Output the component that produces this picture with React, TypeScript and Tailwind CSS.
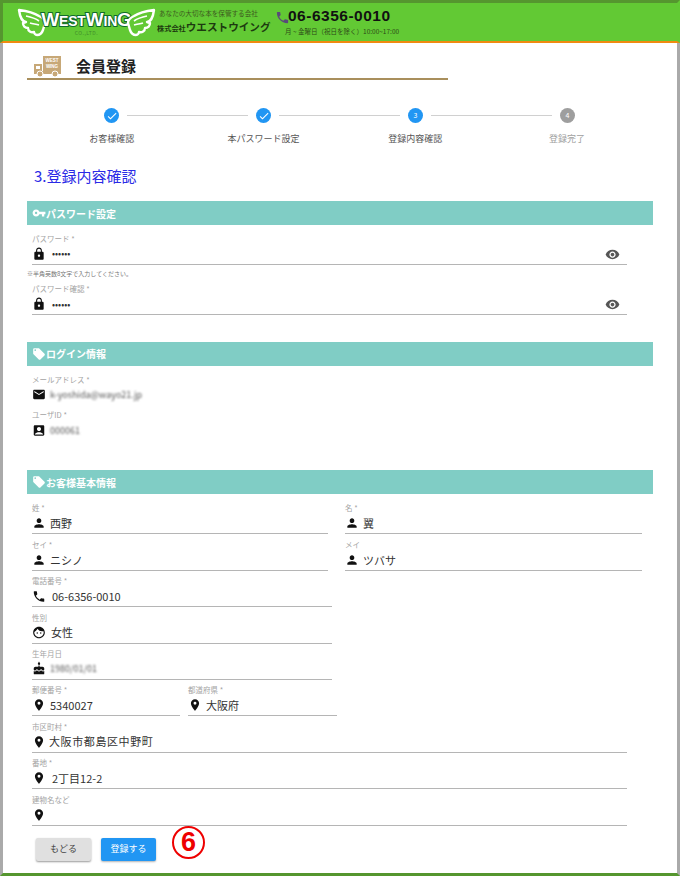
import type { ReactNode } from "react";
import {
  MdAccountBox,
  MdCake,
  MdCheck,
  MdEmail,
  MdFace,
  MdLocalOffer,
  MdLock,
  MdPerson,
  MdPhone,
  MdPlace,
  MdVisibility,
  MdVpnKey,
} from "react-icons/md";

const steps = [
  { label: "お客様確認", state: "done" },
  { label: "本パスワード設定", state: "done" },
  { label: "登録内容確認", state: "active" },
  { label: "登録完了", state: "todo" },
];

function Wing({ flip }: { flip?: boolean }) {
  return (
    <svg width="30" height="29" viewBox="0 0 30 29" className={`shrink-0 ${flip ? "-scale-x-100" : ""}`}>
      <path
        d="M2 2 C10 3 16 4 22 8 C26 10 28 12 28 15 L26 22 C25 25 23 27 20 27 C18 27 17 25 17 24 C14 25 11 23 11 20 C8 20 6 18 6 15 L9 14 C6 14 3 10 2 2 Z"
        fill="#62c934"
        stroke="#fff"
        strokeWidth="2.4"
        strokeLinejoin="round"
      />
      <path d="M9 8 C14 9 18 10 22 13 M13 15 C16 16 19 16 22 17" fill="none" stroke="#fff" strokeWidth="1.6" />
    </svg>
  );
}

function Truck() {
  return (
    <svg width="29" height="22" viewBox="0 0 29 22">
      <rect x="10" y="0" width="18" height="15" fill="#c7a877" />
      <path d="M1 8 L9 8 L9 18 L1 18 L1 12 Z" fill="#c7a877" />
      <rect x="1" y="15" width="27" height="3" fill="#c7a877" />
      <rect x="3" y="10" width="4" height="3" fill="#fff" />
      <circle cx="7" cy="18" r="3" fill="#c7a877" stroke="#fff" />
      <circle cx="22" cy="18" r="3" fill="#c7a877" stroke="#fff" />
      <text x="19" y="6" textAnchor="middle" fontSize="4.5" fontWeight="700" fill="#fff" fontFamily="Liberation Sans">WEST</text>
      <text x="19" y="12" textAnchor="middle" fontSize="4.5" fontWeight="700" fill="#fff" fontFamily="Liberation Sans">WING</text>
    </svg>
  );
}

function Band({ icon, title }: { icon: ReactNode; title: string }) {
  return (
    <div className="flex h-[24px] w-[626px] items-center bg-[#80cdc5] pl-[5px] text-[10px] font-bold text-white">
      {icon}
      <span>{title}</span>
    </div>
  );
}

function Field({
  label,
  icon,
  value,
  width,
  blur,
  plain,
  right,
  valueClass = "ml-[4px]",
}: {
  label: string;
  icon: ReactNode;
  value?: string;
  width: string;
  blur?: boolean;
  plain?: boolean;
  right?: ReactNode;
  valueClass?: string;
}) {
  return (
    <div className={`mb-[4.4px] ${width}`}>
      <div className="h-[11px] text-[7.5px] leading-[11px] text-[#a3a3a3]">{label}</div>
      <div
        className={`box-content flex h-[20px] items-center text-[11px] text-[#333] ${
          plain ? "" : "border-b border-[#b5b5b5]"
        }`}
      >
        <span className="flex w-[14px] justify-center text-[#111]">{icon}</span>
        <span className={`${valueClass} ${blur ? "text-[9px] text-[#555] blur-[1.2px]" : ""}`}>{value}</span>
        {right}
      </div>
    </div>
  );
}

const person = <MdPerson size={16} />;
const pin = <MdPlace size={16} />;
const eye = <MdVisibility size={15} className="ml-auto mr-[7px] text-[#555]" />;

export default function App() {
  return (
    <div
      className="flex h-[876px] w-[680px] flex-col overflow-hidden bg-white"
      style={{ fontFamily: '"Noto Sans CJK JP", Roboto, sans-serif' }}
    >
      <header className="flex h-[43px] shrink-0 items-center border-x-[3px] border-t-[3px] border-b-[2px] border-r-[#62c934] border-t-[#55962f] border-b-[#f08a10] border-l-[#55962f] bg-[#62c934] pl-[14px]">
        <div className="flex w-[139px] shrink-0 items-center">
          <Wing />
          <div className="flex w-[79px] shrink-0 flex-col items-center leading-none">
            <span
              className="text-[14px] font-bold whitespace-nowrap tracking-[-0.2px] text-white [paint-order:stroke_fill] [-webkit-text-stroke:2px_#0f6b2a]"
              style={{ fontFamily: '"Liberation Sans", sans-serif' }}
            >
              <span className="text-[19px]">W</span>EST<span className="text-[19px]">W</span>IN<span className="text-[19px]">G</span>
            </span>
            <span className="mt-[1px] text-[5px] tracking-[0.5px] text-[#3f8a2a]">CO.,LTD.</span>
          </div>
          <Wing flip />
        </div>
        <div className="ml-[1px] flex w-[116px] shrink-0 flex-col whitespace-nowrap">
          <span className="pl-[2px] text-[6.6px] leading-[11px] text-[#3d5a20]">あなたの大切な本を保管する会社</span>
          <span className="text-[7.2px] font-bold leading-[15px] text-[#1d3a10]">
            株式会社<span className="text-[10.6px]">ウエストウイング</span>
          </span>
        </div>
        <MdPhone size={15} className="mb-[10px] ml-[2px] shrink-0 text-[#5a4a7a]" />
        <div className="-ml-[5px] flex flex-col whitespace-nowrap">
          <span
            className="pl-[3px] text-[15.5px] font-bold leading-[18px] tracking-[0.5px] text-[#111]"
            style={{ fontFamily: '"Liberation Sans", sans-serif' }}
          >
            06-6356-0010
          </span>
          <span className="text-[6.5px] leading-[12px] text-[#2d4a18]">月 ~ 金曜日（祝日を除く）10:00~17:00</span>
        </div>
      </header>

      <main className="flex-1 border-x-[3px] border-b-[3px] border-x-[#aaaaaa] border-b-[#55962f] pl-[24px]">
        <div className="flex h-[37px] w-[421px] items-end border-b-2 border-[#a98f5c] pl-[6px]">
          <Truck />
          <span className="ml-[14px] text-[15px] leading-[24px] font-bold text-[#222]">会員登録</span>
        </div>

        <div className="mt-[28px] ml-[9px] w-[607px]">
          <div className="flex items-center px-[68px]">
            {steps.map((s, i) => (
              <div key={s.label} className={`flex items-center ${i < 3 ? "flex-1" : ""}`}>
                <span
                  className={`flex h-[15px] w-[15px] items-center justify-center rounded-full text-[7px] text-white ${
                    s.state === "todo" ? "bg-[#9e9e9e]" : "bg-[#2196f3]"
                  }`}
                >
                  {s.state === "done" ? <MdCheck size={12} /> : i + 1}
                </span>
                {i < 3 && <span className="mx-[8px] h-px flex-1 bg-[#d0d0d0]" />}
              </div>
            ))}
          </div>
          <div className="mt-[9px] grid grid-cols-4 text-center text-[9px] leading-[14px]">
            {steps.map((s) => (
              <span key={s.label} className={s.state === "todo" ? "text-[#a0a0a0]" : "text-[#555]"}>
                {s.label}
              </span>
            ))}
          </div>
        </div>

        <h1 className="mt-[18px] ml-[7px] text-[15px] leading-[24px] text-[#2a2ae6]">3.登録内容確認</h1>

        <div className="mt-[13px]">
          <Band icon={<MdVpnKey size={14} />} title="パスワード設定" />
        </div>
        <div className="mt-[8px] ml-[5px]">
          <Field label="パスワード *" icon={<MdLock size={16} />} value="••••••" width="w-[595px]" right={eye} valueClass="ml-[6px] text-[9px]" />
        </div>
        <div className="mt-[1.6px] h-[14px] text-[6px] leading-[10px] text-[#777]">※半角英数8文字で入力してください。</div>
        <div className="ml-[5px]">
          <Field label="パスワード確認 *" icon={<MdLock size={16} />} value="••••••" width="w-[595px]" right={eye} valueClass="ml-[6px] text-[9px]" />
        </div>

        <div className="mt-[26.6px]">
          <Band icon={<MdLocalOffer size={14} />} title="ログイン情報" />
        </div>
        <div className="mt-[8px] ml-[5px]">
          <Field label="メールアドレス *" icon={<MdEmail size={15} />} value="k-yoshida@wayo21.jp" blur plain width="w-[595px]" />
          <Field label="ユーザID *" icon={<MdAccountBox size={15} />} value="000061" blur plain width="w-[595px]" />
        </div>

        <div className="mt-[30px]">
          <Band icon={<MdLocalOffer size={14} />} title="お客様基本情報" />
        </div>
        <div className="mt-[8px] ml-[5px]">
          <div className="flex gap-[17px]">
            <Field label="姓 *" icon={person} value="西野" width="w-[296px]" />
            <Field label="名 *" icon={person} value="翼" width="w-[297px]" />
          </div>
          <div className="flex gap-[17px]">
            <Field label="セイ *" icon={person} value="ニシノ" width="w-[296px]" />
            <Field label="メイ" icon={person} value="ツバサ" width="w-[297px]" />
          </div>
          <Field label="電話番号 *" icon={<MdPhone size={15} />} value="06-6356-0010" width="w-[300px]" valueClass="ml-[6px]" />
          <Field label="性別" icon={<MdFace size={15} />} value="女性" width="w-[300px]" valueClass="ml-[5px]" />
          <Field label="生年月日" icon={<MdCake size={15} />} value="1980/01/01" blur width="w-[300px]" />
          <div className="flex gap-[8px]">
            <Field label="郵便番号 *" icon={pin} value="5340027" width="w-[148px]" />
            <Field label="都道府県 *" icon={pin} value="大阪府" width="w-[149px]" />
          </div>
          <Field label="市区町村 *" icon={pin} value="大阪市都島区中野町" width="w-[595px]" valueClass="ml-[3px] tracking-[0.6px]" />
          <Field label="番地 *" icon={pin} value="2丁目12-2" width="w-[595px]" valueClass="ml-[6px]" />
          <Field label="建物名など" icon={pin} width="w-[595px]" />
        </div>

        <div className="mt-[12px] ml-[9px] flex h-[23px] items-center gap-[10px]">
          <button className="h-[23px] w-[55px] rounded-[2px] bg-[#e0e0e0] text-[9px] text-[#444] shadow-[0_1px_2px_rgba(0,0,0,0.4)]">
            もどる
          </button>
          <button className="h-[23px] w-[55px] rounded-[2px] bg-[#2196f3] text-[9px] text-white shadow-[0_1px_2px_rgba(0,0,0,0.3)]">
            登録する
          </button>
          <span
            className="mb-[14px] ml-[6px] flex h-[33px] w-[33px] items-center justify-center rounded-full border-[2.5px] border-[#ee0000] text-[27px] leading-none font-bold text-[#ee0000]"
            style={{ fontFamily: '"Liberation Sans", sans-serif' }}
          >
            6
          </span>
        </div>
      </main>
    </div>
  );
}
